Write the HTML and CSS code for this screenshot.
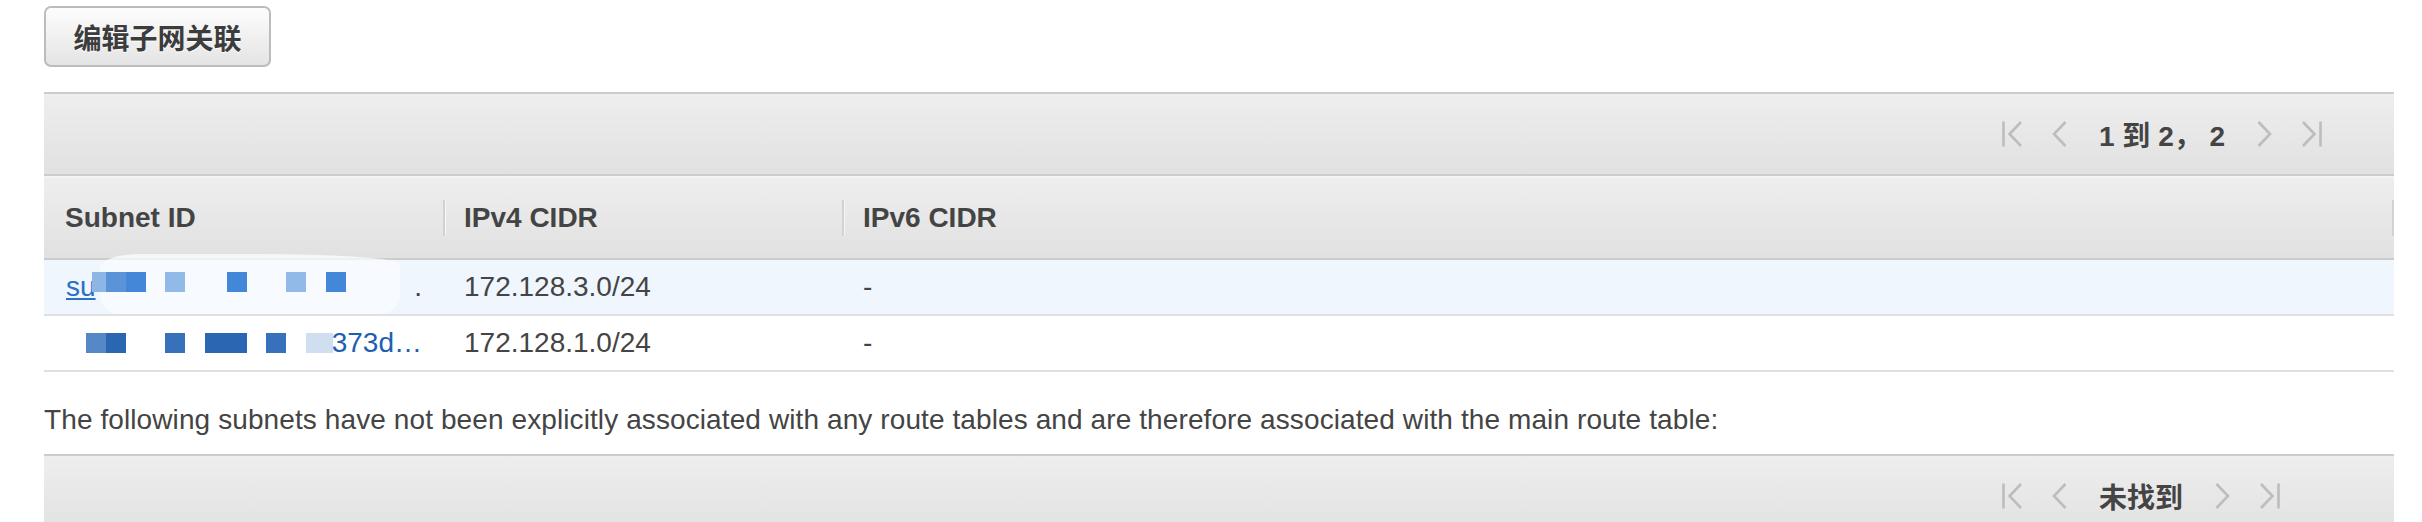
FILE: index.html
```html
<!DOCTYPE html>
<html lang="zh-CN">
<head>
<meta charset="utf-8">
<title>Route table subnet associations</title>
<link rel="stylesheet" href="styles.css">
</head>
<body>
<div class="page">
  <button class="btn" type="button">编辑子网关联</button>

  <section class="panel">
    <div class="pager">
      <nav class="pager-nav">
        <svg class="ico ico-wide" viewBox="0 0 20 26"><path d="M1.5 0.5v25M19 1 7.5 13 19 25"/></svg>
        <svg class="ico" viewBox="0 0 15 26"><path d="M13.5 1 2 13l11.5 12"/></svg>
        <span class="pager-text">1 到 2， 2</span>
        <svg class="ico" viewBox="0 0 15 26"><path d="M1.5 1 13 13 1.5 25"/></svg>
        <svg class="ico ico-wide" viewBox="0 0 20 26"><path d="M1 1l11.5 12L1 25M18.5 0.5v25"/></svg>
      </nav>
    </div>

    <div class="table">
      <div class="thead">
        <div class="th">Subnet ID</div>
        <div class="th th-div">IPv4 CIDR</div>
        <div class="th th-div th-last">IPv6 CIDR</div>
      </div>

      <div class="tr tr-sel">
        <div class="td td-id">
          <a class="link" href="#">su</a>
          <span class="tail">.</span>
          <span class="blob"></span>
          <span class="redact redact-1">
            <i class="sq w14 c-l1"></i><i class="sq w20 c-m1"></i><i class="sq w20 c-d1"></i><i class="sq w20 c-l2 ml19"></i><i class="sq w20 c-d1 ml42"></i><i class="sq w20 c-l2 ml39"></i><i class="sq w20 c-d1 ml20"></i>
          </span>
        </div>
        <div class="td">172.128.3.0/24</div>
        <div class="td">-</div>
      </div>

      <div class="tr">
        <div class="td td-id">
          <span class="tail link-text">373d…</span>
          <span class="redact redact-2">
            <i class="sq w20 c-m2"></i><i class="sq w20 c-d2"></i><i class="sq w20 c-d3 ml39"></i><i class="sq w42 c-d2 ml20"></i><i class="sq w20 c-d3 ml19"></i><i class="sq w27 c-pale ml20"></i>
          </span>
        </div>
        <div class="td">172.128.1.0/24</div>
        <div class="td">-</div>
      </div>
    </div>
  </section>

  <p class="note">The following subnets have not been explicitly associated with any route tables and are therefore associated with the main route table:</p>

  <section class="panel">
    <div class="pager">
      <nav class="pager-nav">
        <svg class="ico ico-wide" viewBox="0 0 20 26"><path d="M1.5 0.5v25M19 1 7.5 13 19 25"/></svg>
        <svg class="ico" viewBox="0 0 15 26"><path d="M13.5 1 2 13l11.5 12"/></svg>
        <span class="pager-text">未找到</span>
        <svg class="ico" viewBox="0 0 15 26"><path d="M1.5 1 13 13 1.5 25"/></svg>
        <svg class="ico ico-wide" viewBox="0 0 20 26"><path d="M1 1l11.5 12L1 25M18.5 0.5v25"/></svg>
      </nav>
    </div>
  </section>
</div>
</body>
</html>
```

FILE: styles.css
```css
html, body {
  margin: 0;
  padding: 0;
  background: #ffffff;
}

body {
  font-family: "Liberation Sans", "Noto Sans CJK SC", sans-serif;
  font-size: 28px;
  color: #444444;
}

.page {
  padding: 6px 28px 0 44px;
}

.btn {
  display: block;
  box-sizing: border-box;
  width: 227px;
  height: 61px;
  padding: 0;
  margin: 0 0 25px 0;
  border: 2px solid #bcbcbc;
  border-radius: 7px;
  background: linear-gradient(#fdfdfd, #e4e4e4);
  font-family: "Liberation Sans", "Noto Sans CJK SC", sans-serif;
  font-size: 28px;
  font-weight: bold;
  color: #3c3c3c;
  text-shadow: 0 1px 0 #ffffff;
  letter-spacing: 0;
}

.panel {
  display: flex;
  flex-direction: column;
}

.pager {
  display: flex;
  justify-content: flex-end;
  align-items: center;
  height: 80px;
  padding-right: 72px;
  border-top: 2px solid #cccccc;
  border-bottom: 2px solid #cccccc;
  background: linear-gradient(#eeeeee, #e1e1e1);
}

.pager-nav {
  display: flex;
  align-items: center;
  width: 320px;
  gap: 30px;
}

.ico {
  width: 15px;
  height: 26px;
  flex: none;
  fill: none;
  stroke: #bdbdbd;
  stroke-width: 2.6;
}

.ico-wide {
  width: 20px;
}

.pager-text {
  margin: 0 2px;
  font-weight: bold;
  color: #444444;
  white-space: pre;
}

.table {
  display: flex;
  flex-direction: column;
}

.thead {
  display: grid;
  grid-template-columns: 399px 399px 1fr;
  height: 80px;
  border-top: 2px solid #f4f4f4;
  border-bottom: 2px solid #cccccc;
  background: linear-gradient(#eeeeee, #e1e1e1);
}

.th {
  position: relative;
  display: flex;
  align-items: center;
  padding-left: 21px;
  font-weight: bold;
  color: #444444;
}

.th-div::before,
.th-last::after {
  content: "";
  position: absolute;
  top: 22px;
  height: 36px;
  width: 2px;
  background: #d2d2d2;
}

.th-div::before {
  left: 0;
  box-shadow: 1px 0 0 #f6f6f6;
}

.th-last::after {
  right: 0;
}

.tr {
  display: grid;
  grid-template-columns: 399px 399px 1fr;
  height: 54px;
  border-bottom: 2px solid #e0e0e0;
  background: #ffffff;
}

.tr-sel {
  background: #eff6fe;
}

.td {
  position: relative;
  display: flex;
  align-items: center;
  padding-left: 21px;
  padding-right: 21px;
  color: #444444;
  white-space: nowrap;
}

.td-id {
  padding-left: 22px;
}

.link {
  color: #2a6fc9;
  text-decoration: underline;
}

.link-text {
  color: #1e5fb1;
}

.tail {
  margin-left: auto;
}

.blob {
  position: absolute;
  left: 56px;
  top: -6px;
  width: 300px;
  height: 60px;
  border-radius: 40px 140px 20px 20px / 14px 10px 20px 20px;
  background: rgba(250, 252, 255, 0.75);
}

.redact {
  position: absolute;
  display: flex;
  height: 20px;
}

.redact-1 {
  left: 48px;
  top: 12px;
}

.redact-2 {
  left: 42px;
  top: 17px;
}

.sq {
  display: block;
  height: 20px;
}

.w14 { width: 14px; }
.w20 { width: 20px; }
.w27 { width: 27px; }
.w42 { width: 42px; }

.ml19 { margin-left: 19px; }
.ml20 { margin-left: 20px; }
.ml39 { margin-left: 39px; }
.ml42 { margin-left: 42px; }

.c-l1 { background: #8db5e6; }
.c-l2 { background: #91bae8; }
.c-m1 { background: #5a93d8; }
.c-d1 { background: #4387d8; }
.c-m2 { background: #5688c6; }
.c-d2 { background: #2b66b3; }
.c-d3 { background: #3770bb; }
.c-pale { background: #d0dff0; }

.note {
  margin: 32px 0 18px 0;
  line-height: 32px;
  letter-spacing: 0.1px;
  color: #444444;
}
```
